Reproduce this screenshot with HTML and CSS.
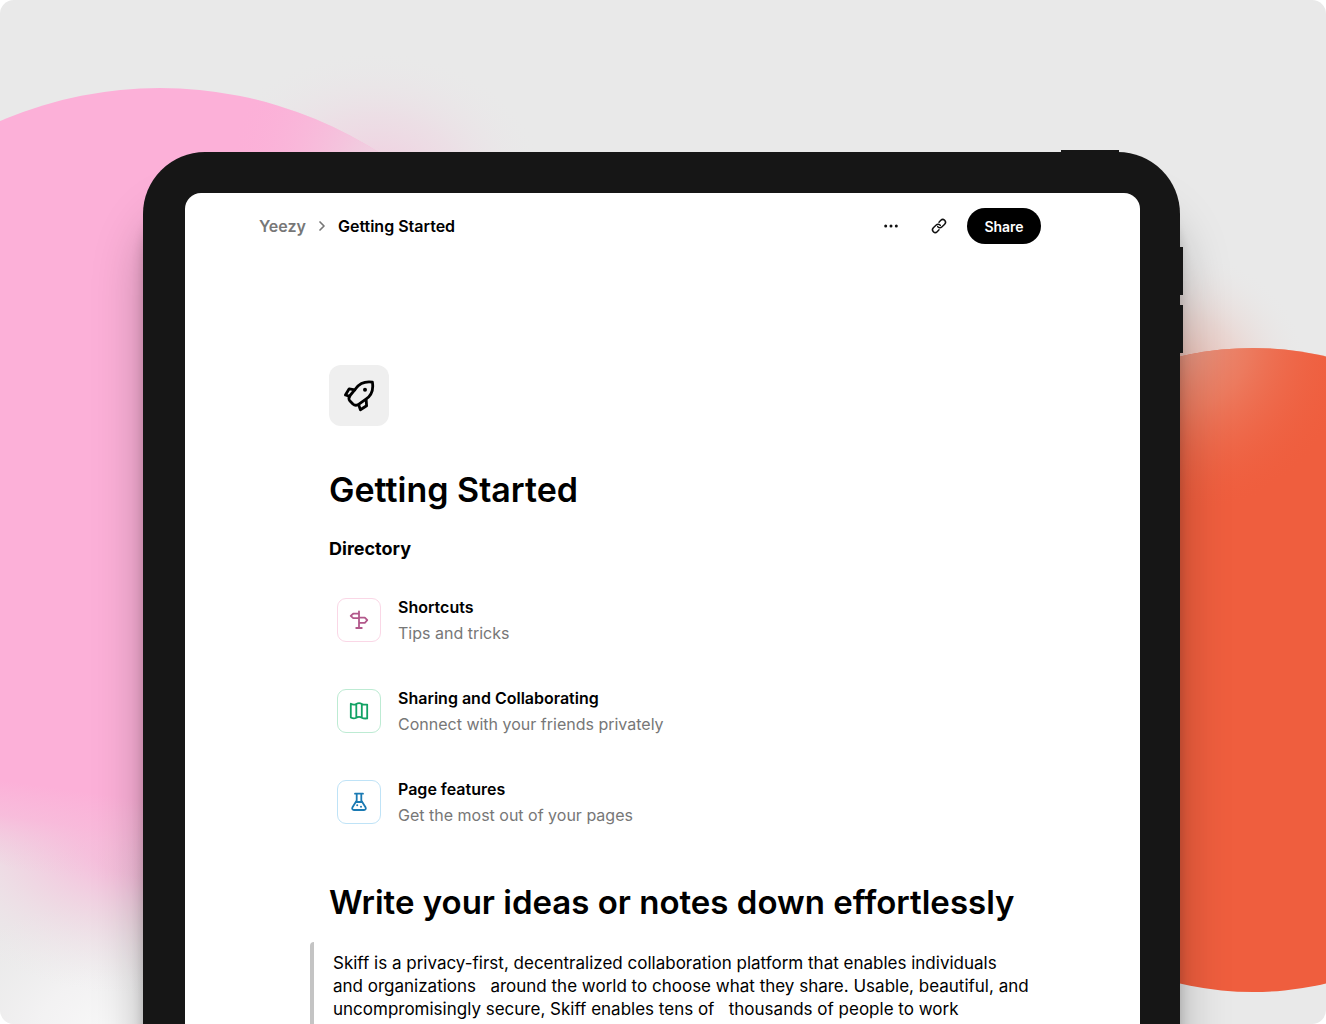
FILE: index.html
```
<!DOCTYPE html>
<html lang="en">
<head>
<meta charset="utf-8">
<meta name="viewport" content="width=device-width, initial-scale=1">
<title>Getting Started</title>
<link rel="stylesheet" href="styles.css">
</head>
<body>
<div class="stage">
  <svg class="backdrop" viewBox="0 0 1326 1024" preserveAspectRatio="xMidYMin slice" aria-hidden="true">
    <defs>
      <linearGradient id="pinkFade" gradientUnits="userSpaceOnUse" x1="0" y1="780" x2="-12" y2="866">
        <stop offset="0" stop-color="#fcb0d8"/>
        <stop offset="0.4" stop-color="#f9b8da" stop-opacity="0.85"/>
        <stop offset="1" stop-color="#f2c9de" stop-opacity="0"/>
      </linearGradient>
      <radialGradient id="pinkCorner" gradientUnits="userSpaceOnUse" cx="400" cy="170" r="170">
        <stop offset="0" stop-color="#ecdce4"/>
        <stop offset="0.3" stop-color="#f0cfe0" stop-opacity="0.8"/>
        <stop offset="1" stop-color="#fcb0d8" stop-opacity="0"/>
      </radialGradient>
      <radialGradient id="haloGlow">
        <stop offset="0" stop-color="#f2cbdf"/>
        <stop offset="0.5" stop-color="#eed8e3" stop-opacity="0.6"/>
        <stop offset="1" stop-color="#e9e9e9" stop-opacity="0"/>
      </radialGradient>
      <radialGradient id="pinkGlow">
        <stop offset="0" stop-color="#fab4d9"/>
        <stop offset="0.25" stop-color="#f6bedc"/>
        <stop offset="0.55" stop-color="#f1d2e1" stop-opacity="0.7"/>
        <stop offset="1" stop-color="#eeebec" stop-opacity="0"/>
      </radialGradient>
      <radialGradient id="whiteGlow">
        <stop offset="0" stop-color="#f8f8f8"/>
        <stop offset="0.4" stop-color="#f5f4f5" stop-opacity="0.8"/>
        <stop offset="1" stop-color="#f0eeef" stop-opacity="0"/>
      </radialGradient>
      <radialGradient id="orangeGlow">
        <stop offset="0" stop-color="#ef9681" stop-opacity="0.65"/>
        <stop offset="0.5" stop-color="#ebbdb3" stop-opacity="0.4"/>
        <stop offset="1" stop-color="#e9e9e9" stop-opacity="0"/>
      </radialGradient>
      <radialGradient id="orangeLight">
        <stop offset="0" stop-color="#e2a393" stop-opacity="0.9"/>
        <stop offset="0.4" stop-color="#ea8d74" stop-opacity="0.6"/>
        <stop offset="1" stop-color="#ef5e3e" stop-opacity="0"/>
      </radialGradient>
      <clipPath id="orangeClip"><circle cx="1253" cy="670" r="322"/></clipPath>
      <clipPath id="pinkClip"><circle cx="160" cy="492" r="404"/></clipPath>
    </defs>
    <rect width="1326" height="1024" fill="#e9e9e9"/>
    <ellipse cx="375" cy="180" rx="170" ry="130" fill="url(#haloGlow)"/>
    <ellipse cx="110" cy="1030" rx="180" ry="130" fill="url(#whiteGlow)"/>
    <ellipse cx="150" cy="835" rx="270" ry="160" fill="url(#pinkGlow)"/>
    <circle cx="160" cy="492" r="404" fill="url(#pinkFade)"/>
    <circle cx="400" cy="170" r="170" fill="url(#pinkCorner)" clip-path="url(#pinkClip)"/>
    <circle cx="1180" cy="380" r="130" fill="url(#orangeGlow)"/>
    <circle cx="1253" cy="670" r="322" fill="#ef5e3e"/>
    <circle cx="1180" cy="340" r="175" fill="url(#orangeLight)" clip-path="url(#orangeClip)"/>
  </svg>

  <div class="device">
    <span class="key key-power"></span>
    <span class="key key-up"></span>
    <span class="key key-down"></span>
    <div class="screen">
      <header class="topbar">
        <nav class="crumbs" aria-label="Breadcrumb">
          <a class="crumb-link" href="#">Yeezy</a>
          <svg class="crumb-arrow" width="8" height="12" viewBox="0 0 8 12" aria-hidden="true"><path d="M2 2l4 4-4 4" fill="none" stroke="#777" stroke-width="1.7" stroke-linecap="round" stroke-linejoin="round"/></svg>
          <span class="crumb-current">Getting Started</span>
        </nav>
        <div class="actions">
          <button class="icon-button" type="button" aria-label="More">
            <svg width="18" height="18" viewBox="0 0 18 18"><g fill="#111"><circle cx="3.7" cy="9" r="1.5"/><circle cx="9" cy="9" r="1.5"/><circle cx="14.3" cy="9" r="1.5"/></g></svg>
          </button>
          <button class="icon-button" type="button" aria-label="Copy link">
            <svg width="18" height="18" viewBox="0 0 18 18"><g transform="rotate(-45 9 9)" fill="none" stroke="#111" stroke-width="1.5" stroke-linecap="round"><path d="M6.3 11.7H3.700a2.700 2.700 0 0 1 0-5.400h4.100a2.700 2.700 0 0 1 2.600 3.200"/><path d="M11.700 6.300h2.600a2.700 2.700 0 0 1 0 5.400h-4.100A2.700 2.700 0 0 1 7.600 8.500"/></g></svg>
          </button>
          <button class="share" type="button">Share</button>
        </div>
      </header>

      <main class="page">
        <div class="page-icon">
          <svg width="32" height="32" viewBox="0 0 32 32" fill="none" stroke="#000" stroke-width="2.8" stroke-linejoin="round" stroke-linecap="round" aria-hidden="true">
            <path d="M29.400 2.200C22 1.100 16.500 3.400 12.600 8.800L6.600 16c-.9 1.800-.8 3.800.4 5.100l2.900 2.900c1.400 1.300 3.300 1.600 5 .8l7.700-5.400C28.700 15.500 30.700 10.100 29.400 2.200Z"/>
            <path d="M11.800 9.800 6.200 8.800 2.400 15l4.400 1.300M23.200 20l.4 5.800-6.200 4-1.700-5"/>
            <circle cx="22" cy="9.800" r="2" fill="#000" stroke="none"/>
          </svg>
        </div>
        <h1 class="title">Getting Started</h1>
        <h2 class="section">Directory</h2>
        <ul class="directory">
          <li class="entry">
            <span class="badge badge-pink">
              <svg width="20" height="20" viewBox="0 0 20 20" fill="none" stroke="currentColor" stroke-width="1.800" stroke-linejoin="round" stroke-linecap="round" aria-hidden="true"><path d="M10 1.500v16.500M7.200 18h5.600M10 3.700H4.200L1.700 5.900 4.200 8.200H10M10 7.600h5.800l2.500 2.600-2.500 2.600H10"/></svg>
            </span>
            <span class="entry-text"><a class="entry-name" href="#">Shortcuts</a><span class="entry-note">Tips and tricks</span></span>
          </li>
          <li class="entry">
            <span class="badge badge-green">
              <svg width="20" height="20" viewBox="0 0 20 20" fill="none" stroke="currentColor" stroke-width="1.800" stroke-linejoin="round" stroke-linecap="round" aria-hidden="true"><path d="M1.800 2.700c2 1.300 3.700 1.300 5.500.2 1.800-1.100 3.700-1.100 5.500 0 1.700 1 3.400.9 5.400.7v13.800c-2 .2-3.700.3-5.400-.7-1.800-1.100-3.700-1.100-5.500 0-1.800 1-3.500.9-5.500-.3ZM7.300 3v13.500M12.800 3v13.500"/></svg>
            </span>
            <span class="entry-text"><a class="entry-name" href="#">Sharing and Collaborating</a><span class="entry-note">Connect with your friends privately</span></span>
          </li>
          <li class="entry">
            <span class="badge badge-blue">
              <svg width="20" height="20" viewBox="0 0 20 20" fill="none" stroke="currentColor" stroke-width="1.800" stroke-linejoin="round" stroke-linecap="round" aria-hidden="true"><path d="M6 1.700h8M7.700 1.700v6.800L3.500 15.300C2.700 16.700 3.400 18 5 18h10c1.600 0 2.300-1.300 1.500-2.700L12.300 8.500V1.700M6.700 10h6.600"/><g fill="currentColor" stroke="none"><circle cx="8.200" cy="13.300" r="1"/><circle cx="12" cy="14.800" r="1"/></g></svg>
            </span>
            <span class="entry-text"><a class="entry-name" href="#">Page features</a><span class="entry-note">Get the most out of your pages</span></span>
          </li>
        </ul>
        <h2 class="title title-second">Write your ideas or notes down effortlessly</h2>
        <blockquote class="quote">Skiff is a privacy-first, decentralized collaboration platform that enables individuals<br>and organizations &nbsp; around the world to choose what they share. Usable, beautiful, and<br>uncompromisingly secure, Skiff enables tens of &nbsp; thousands of people to work</blockquote>
      </main>
    </div>
  </div>
</div>
</body>
</html>
```
FILE: styles.css
```
* { box-sizing: border-box; }

body {
  margin: 0;
  background: #fff;
  color: #000;
  font-family: Inter, "Liberation Sans", sans-serif;
}

.stage {
  position: relative;
  display: flex;
  height: 100vh;
  padding: 152px 146px 0 143px;
  border-radius: 14px;
  overflow: hidden;
}

.backdrop {
  position: absolute;
  inset: 0;
  width: 100%;
  height: 100%;
}

.device {
  position: relative;
  flex: 1;
  display: flex;
  min-width: 0;
  padding: 41px 40px 0 42px;
  border-radius: 62px 62px 0 0;
  background: #161616;
  box-shadow: 0 60px 50px rgba(0, 0, 0, 0.26), 0 40px 12px rgba(0, 0, 0, 0.18);
}

.key { position: absolute; background: #161616; }
.key-power { top: -2px; right: 61px; width: 58px; height: 4px; }
.key-up, .key-down { right: -3px; width: 4px; height: 48px; }
.key-up { top: 95px; }
.key-down { top: 153px; }

.screen {
  flex: 1;
  min-width: 0;
  overflow: hidden;
  border-radius: 16px 16px 0 0;
  background: #fff;
}

.topbar {
  display: flex;
  align-items: center;
  justify-content: space-between;
  padding: 15px 99px 0 74px;
}

.crumbs {
  display: flex;
  align-items: center;
  gap: 12px;
  font-size: 16px;
  font-weight: 600;
}

.crumb-link { color: #777; text-decoration: none; }

.actions { display: flex; align-items: center; gap: 8px; }

.icon-button {
  display: flex;
  align-items: center;
  justify-content: center;
  width: 40px;
  height: 36px;
  padding: 0;
  border: 0;
  background: none;
}

.share {
  width: 74px;
  height: 36px;
  padding: 0;
  border: 0;
  border-radius: 18px;
  background: #000;
  color: #fff;
  font: 600 14px Inter, "Liberation Sans", sans-serif;
}

.page { padding: 121px 124px 0 144px; }

.page-icon {
  display: flex;
  align-items: center;
  justify-content: center;
  width: 60px;
  height: 61px;
  border-radius: 12px;
  background: #efefef;
}

.title {
  margin: 42px 0 0;
  font-size: 34px;
  font-weight: 600;
  line-height: 44px;
  white-space: nowrap;
}

.title-second {
  margin-top: 52px;
  font-size: 33px;
}

.section {
  margin: 25px 0 0;
  font-size: 18px;
  font-weight: 700;
  line-height: 24px;
}

.directory {
  display: flex;
  flex-direction: column;
  gap: 39px;
  margin: 33px 0 0;
  padding: 0 0 0 8px;
  list-style: none;
}

.entry { display: flex; align-items: center; gap: 17px; }

.badge {
  display: flex;
  align-items: center;
  justify-content: center;
  width: 44px;
  height: 44px;
  border: 1px solid;
  border-radius: 9px;
}

.badge svg { display: block; }
.badge-pink { border-color: #fad7e6; color: #b2588b; }
.badge-green { border-color: #bdebd3; color: #12a264; }
.badge-blue { border-color: #bfe3f7; color: #1a7ab3; }

.entry-text { display: flex; flex-direction: column; line-height: 26px; font-size: 16px; }
.entry-name { color: #000; font-weight: 600; text-decoration: none; }
.entry-note { color: #777; }

.quote {
  margin: 18px 0 0 -19px;
  padding: 10px 0 10px 19px;
  border-left: 4px solid #c4c4c4;
  border-top-left-radius: 4px;
  font-size: 17px;
  line-height: 23px;
  white-space: nowrap;
}
```
